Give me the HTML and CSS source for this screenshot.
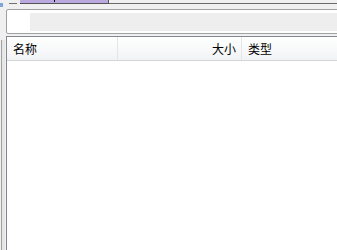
FILE: index.html
```html
<!DOCTYPE html>
<html lang="zh">
<head>
    <meta charset="UTF-8">
    <title>文件列表</title>
    <link rel="stylesheet" href="styles.css">
</head>
<body>
    <div class="topbar">
        <span class="chip"></span>
        <span class="dash"></span>
        <div class="tab"><span class="tab-mark"></span></div>
        <div class="topline"></div>
    </div>

    <div class="address">
        <div class="address-field"></div>
    </div>

    <div class="main">
        <div class="side"></div>
        <div class="list">
            <div class="list-header">
                <div class="col col-name">名称</div>
                <div class="col col-size">大小</div>
                <div class="col col-type">类型</div>
            </div>
        </div>
    </div>
</body>
</html>
```

FILE: styles.css
```css
body {
    margin: 0;
    background-color: #f0f0f0;
    font-family: "Noto Sans CJK SC", "Microsoft YaHei", sans-serif;
    font-size: 12px;
    color: #000;
    width: 337px;
    height: 250px;
    overflow: hidden;
}

/* top strip with tab */
.topbar {
    display: flex;
    align-items: flex-start;
    height: 9px;
}

.chip {
    width: 3px;
    height: 4px;
    margin-top: 3px;
    background-color: #7fa6dc;
}

.dash {
    width: 8px;
    height: 1px;
    margin: 3px 3px 0 6px;
    background-color: #707070;
}

.tab {
    position: relative;
    width: 88px;
    height: 3px;
    background-color: #b9a9de;
    border-right: 1px solid #555;
    border-bottom: 1px solid #555;
}

.tab-mark {
    position: absolute;
    left: 34px;
    top: 0;
    width: 1px;
    height: 2px;
    background-color: #000;
}

.topline {
    flex: 1;
    height: 3px;
    border-bottom: 1px solid #6a6a6a;
}

/* address box */
.address {
    margin-left: 6px;
    margin-right: -4px;
    height: 20px;
    padding: 3px 0 0 23px;
    background-color: #fff;
    border: 1px solid #a0a0a0;
    border-radius: 2px;
}

.address-field {
    height: 18px;
    background-color: #eeeeee;
}

/* file list */
.main {
    display: flex;
    margin-top: 2px;
    height: 214px;
}

.side {
    width: 1px;
    margin: 4px 1px 0 1px;
    background-color: #a0a0a0;
    border-right: 3px solid #e6e6e6;
}

.list {
    flex: 1;
    margin-right: -4px;
    background-color: #fff;
    border: 1px solid #828790;
    border-bottom: none;
}

.list-header {
    display: flex;
    height: 23px;
    background: linear-gradient(#ffffff, #f2f3f5);
    border-bottom: 1px solid #d5d5d5;
}

.col {
    line-height: 23px;
    border-right: 1px solid #e3e5e7;
    box-sizing: border-box;
}

.col-name {
    width: 111px;
    padding-left: 6px;
}

.col-size {
    width: 124px;
    padding-right: 5px;
    text-align: right;
}

.col-type {
    flex: 1;
    padding-left: 6px;
    border-right: none;
}
```
